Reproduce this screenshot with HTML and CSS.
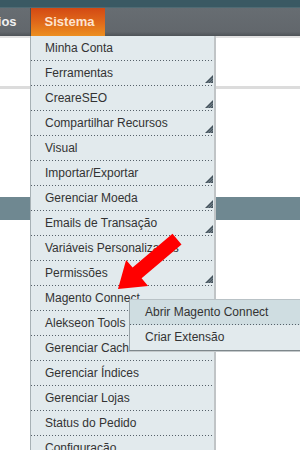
FILE: index.html
```html
<!DOCTYPE html>
<html lang="pt-BR">

<head>
    <meta charset="UTF-8">
    <meta name="viewport" content="width=device-width, initial-scale=1.0">
    <title>Sistema</title>
    <link rel="stylesheet" href="styles.css">
</head>

<body>
    <div class="topbar"></div>
    <div class="nav">
        <a class="nav-item first">Relatórios</a>
        <a class="nav-item active">Sistema</a>
    </div>

    <!-- conteudo da pagina, atras do menu -->
    <div class="page">
        <div class="page-head"></div>
        <div class="page-gap"></div>
        <div class="page-bar"></div>
    </div>

    <ul class="dropdown">
        <li class="item">Minha Conta</li>
        <li class="item">Ferramentas <svg class="sub-icon" width="8" height="8" viewBox="0 0 8 8"><path d="M8 0V8H0Z" fill="#44525c"/><path d="M2.6 8L8 2.6M5.2 8L8 5.2" stroke="#9eabb2" stroke-width=".7"/></svg></li>
        <li class="item">CreareSEO <svg class="sub-icon" width="8" height="8" viewBox="0 0 8 8"><path d="M8 0V8H0Z" fill="#44525c"/><path d="M2.6 8L8 2.6M5.2 8L8 5.2" stroke="#9eabb2" stroke-width=".7"/></svg></li>
        <li class="item">Compartilhar Recursos <svg class="sub-icon" width="8" height="8" viewBox="0 0 8 8"><path d="M8 0V8H0Z" fill="#44525c"/><path d="M2.6 8L8 2.6M5.2 8L8 5.2" stroke="#9eabb2" stroke-width=".7"/></svg></li>
        <li class="item">Visual</li>
        <li class="item">Importar/Exportar <svg class="sub-icon" width="8" height="8" viewBox="0 0 8 8"><path d="M8 0V8H0Z" fill="#44525c"/><path d="M2.6 8L8 2.6M5.2 8L8 5.2" stroke="#9eabb2" stroke-width=".7"/></svg></li>
        <li class="item">Gerenciar Moeda <svg class="sub-icon" width="8" height="8" viewBox="0 0 8 8"><path d="M8 0V8H0Z" fill="#44525c"/><path d="M2.6 8L8 2.6M5.2 8L8 5.2" stroke="#9eabb2" stroke-width=".7"/></svg></li>
        <li class="item">Emails de Transação <svg class="sub-icon" width="8" height="8" viewBox="0 0 8 8"><path d="M8 0V8H0Z" fill="#44525c"/><path d="M2.6 8L8 2.6M5.2 8L8 5.2" stroke="#9eabb2" stroke-width=".7"/></svg></li>
        <li class="item">Variáveis Personalizadas</li>
        <li class="item">Permissões <svg class="sub-icon" width="8" height="8" viewBox="0 0 8 8"><path d="M8 0V8H0Z" fill="#44525c"/><path d="M2.6 8L8 2.6M5.2 8L8 5.2" stroke="#9eabb2" stroke-width=".7"/></svg></li>
        <li class="item open">Magento Connect <svg class="sub-icon" width="8" height="8" viewBox="0 0 8 8"><path d="M8 0V8H0Z" fill="#44525c"/><path d="M2.6 8L8 2.6M5.2 8L8 5.2" stroke="#9eabb2" stroke-width=".7"/></svg>
            <ul class="submenu">
                <li class="item hover">Abrir Magento Connect</li>
                <li class="item last">Criar Extensão</li>
            </ul>
        </li>
        <li class="item">Alekseon Tools <svg class="sub-icon" width="8" height="8" viewBox="0 0 8 8"><path d="M8 0V8H0Z" fill="#44525c"/><path d="M2.6 8L8 2.6M5.2 8L8 5.2" stroke="#9eabb2" stroke-width=".7"/></svg></li>
        <li class="item">Gerenciar Cache</li>
        <li class="item">Gerenciar Índices</li>
        <li class="item">Gerenciar Lojas</li>
        <li class="item">Status do Pedido</li>
        <li class="item">Configuração</li>
    </ul>

    <!-- seta vermelha apontando p/ Magento Connect -->
    <svg class="pointer" width="300" height="450" viewBox="0 0 300 450">
        <polygon points="172.5,233.7 132.6,267.6 126.1,259.9 118,289 148.1,285.9 141.6,278.3 181.5,244.4" fill="#ff0000"/>
    </svg>
</body>

</html>
```

FILE: styles.css
```css
body {
    margin: 0;
    width: 300px;
    height: 450px;
    overflow: hidden;
    position: relative;
    background: #fff;
    font-family: "Liberation Sans", Arial, sans-serif;
}

.topbar {
    height: 7px;
    background: #3a5963;
    border-bottom: 1px solid #4f6b74;
}

.nav {
    display: flex;
    height: 28px;
    background: linear-gradient(#676d72, #62676c 85%, #4f5458);
}

.nav-item {
    color: #f1f1f1;
    font-size: 13px;
    font-weight: bold;
    line-height: 28px;
    padding: 0 13px;
    border-right: 1px solid #4a4e52;
    white-space: nowrap;
}

.nav-item.first {
    margin-left: -60px;
}

.nav-item.active {
    box-sizing: border-box;
    width: 74px;
    padding: 0 0 0 14px;
    border-right: none;
    color: #fde4cf;
    background: linear-gradient(#d34913, #e0681a 50%, #ec8f20);
}

.page-head {
    height: 48px;
    border-top: 2px solid #e2e2e2;
    border-bottom: 3px solid #dcdcdc;
}

.page-gap {
    height: 108px;
}

.page-bar {
    height: 23px;
    background: #6f8891;
}

/* menu Sistema aberto */
.dropdown {
    position: absolute;
    top: 36px;
    left: 30px;
    width: 183px;
    height: 420px;
    margin: 0;
    padding: 0;
    list-style: none;
    background: #e2eaed;
    border-left: 1px solid #a7b1b5;
    border-right: 2px solid #c0c4c6;
}

.item {
    position: relative;
    display: flex;
    justify-content: space-between;
    height: 25px;
    line-height: 24px;
    padding: 0 1px 0 14px;
    font-size: 12px;
    color: #333;
    white-space: nowrap;
}

.item::after {
    content: "";
    position: absolute;
    left: 0;
    right: 0;
    bottom: 0;
    height: 1px;
    background: repeating-linear-gradient(90deg, #56616a 0 1px, transparent 1px 3px);
}

.sub-icon {
    align-self: flex-end;
    margin-bottom: 3px;
}

.submenu {
    position: absolute;
    top: 13px;
    left: 98px;
    z-index: 2;
    width: 200px;
    margin: 0;
    padding: 0;
    list-style: none;
    background: #e2eaed;
    border-top: 1px solid #b9c2c6;
    border-left: 1px solid #98a2a7;
    border-bottom: 1px solid #7e878b;
    box-shadow: 0 1px 0 #c4c9cb;
}

.submenu .item {
    padding-left: 15px;
}

.submenu .hover {
    background: #cfdde1;
}

.submenu .last::after {
    display: none;
}

.pointer {
    position: absolute;
    top: 0;
    left: 0;
    z-index: 5;
    pointer-events: none;
}
```
